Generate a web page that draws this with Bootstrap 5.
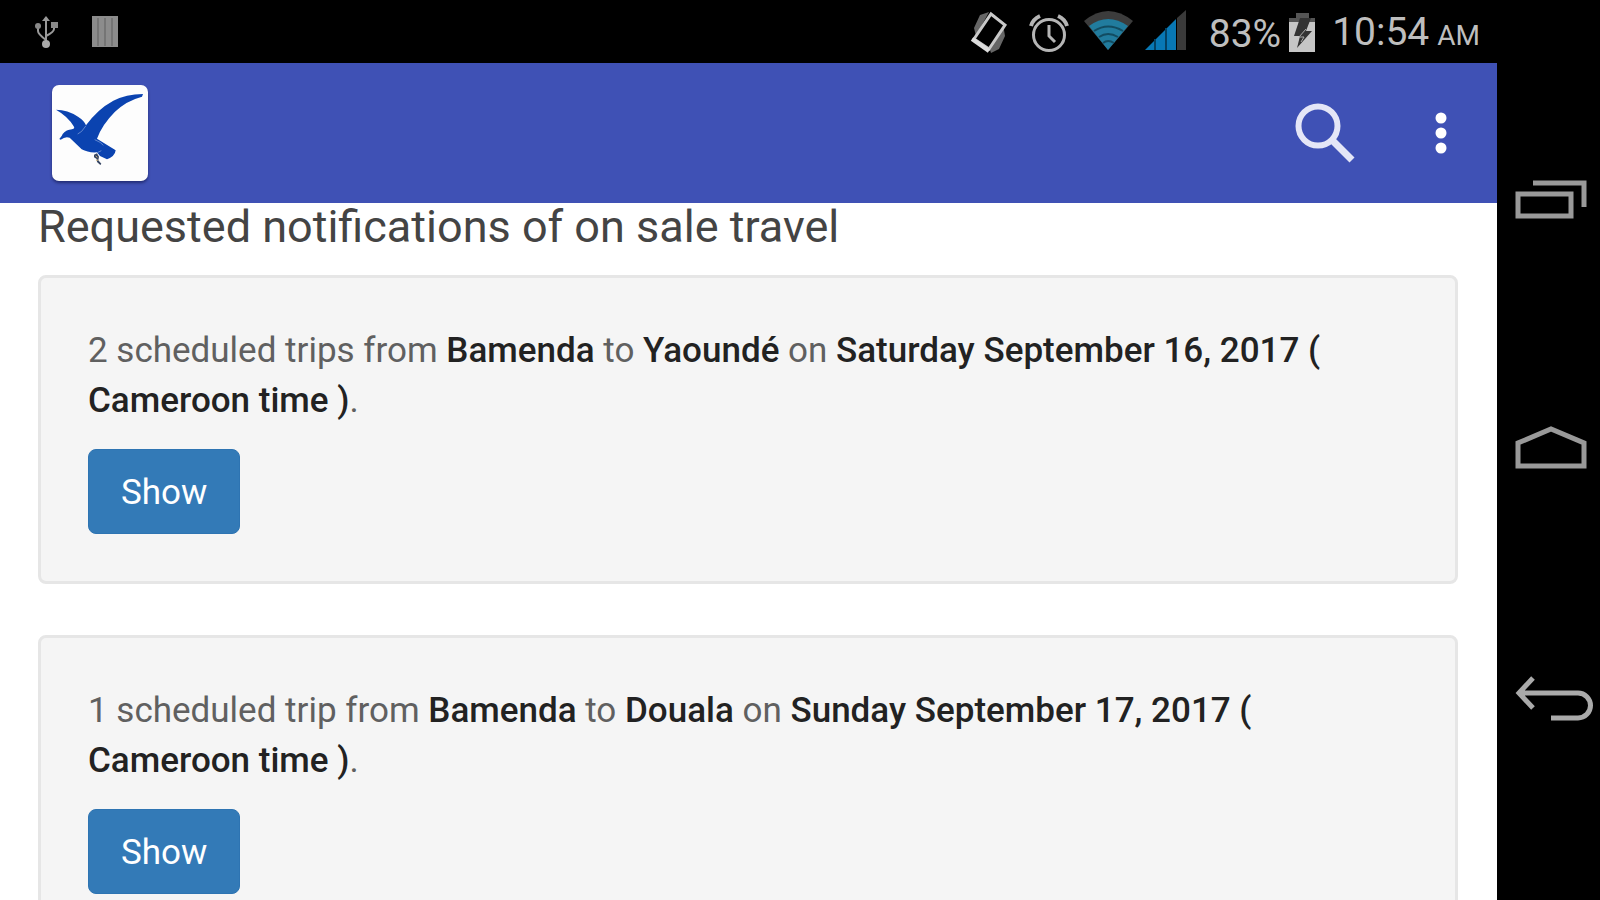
<!DOCTYPE html>
<html lang="en">
<head>
<meta charset="utf-8">
<meta name="viewport" content="width=device-width, initial-scale=1">
<title>Requested notifications</title>
<link rel="stylesheet" href="https://cdn.jsdelivr.net/npm/bootstrap@5.3.0/dist/css/bootstrap.min.css">
<style>
  body { font-family: Roboto, "Liberation Sans", sans-serif; background: #000; }
  svg { display: block; flex: none; }
  .status-bar { height: 63px; background: #000; color: #bebebe; padding: 3px 17px 0 35px; }
  .status-text { font-size: 39px; line-height: 48px; padding-top: 2px; }
  .status-text small { font-size: 28px; }
  .app-bar { height: 140px; background: #3f51b5; padding: 0 42px 0 52px; }
  .logo-tile { background: #fdfdfd; border-radius: 7px; box-shadow: 0 2px 3px rgba(0,0,40,.45); }
  .page-body { background: #fff; padding: 0 39px 0 38px; overflow-y: auto; scrollbar-width: none; }
  .page-body::-webkit-scrollbar { display: none; }
  .page-title { font-size: 45px; line-height: 48px; font-weight: 400; color: #444; margin: 0 0 24px; }
  .trip { background: #f5f5f5; border: 3px solid #e6e6e6; border-radius: 8px; padding: 48px 47px 47px; margin-bottom: 51px; font-size: 35px; line-height: 50px; }
  .trip p { font-weight: 400; color: #606060; margin-bottom: 23px; }
  .trip strong { font-weight: 500; color: #222; }
  .btn-show { --bs-btn-bg: #337ab7; --bs-btn-border-color: #2e74b2; --bs-btn-color: #fff; --bs-btn-hover-bg: #286090; --bs-btn-hover-color: #fff; --bs-btn-font-size: 35px; --bs-btn-line-height: 51px; --bs-btn-padding-x: 32px; --bs-btn-border-radius: 8px; padding-top: 17px; padding-bottom: 15px; }
  .nav-keys { width: 103px; padding: 75px 0 75px 8px; background: #000; }
  .icon-btn { background: none; border: 0; padding: 0; }
</style>
</head>
<body>
<div class="d-flex vh-100 overflow-hidden">
  <div class="d-flex flex-column flex-grow-1 overflow-hidden">
    <div class="status-bar d-flex align-items-center justify-content-between flex-shrink-0">
      <div class="d-flex align-items-center">
        <svg width="84" height="36" viewBox="35 15 84 36" fill="none" stroke="#999" stroke-width="2">
          <path d="M46 18v24M38 26v5q0 3 8 9M54 25v4q0 3-8 7"/>
          <path d="M42 21l4-5 4 5z" fill="#999" stroke="none"/>
          <circle cx="38" cy="26" r="3" fill="#888" stroke="none"/><path d="M51 22h7v6h-7z" fill="#888" stroke="none"/>
          <circle cx="46" cy="44" r="4" fill="#aaa" stroke="none"/>
          <path d="M92 16h26v31H92z" fill="#8c8c8c" stroke="none"/>
          <path d="M98 18v28M105 18v28M112 18v28" stroke="#5e5e5e" stroke-width="1"/>
        </svg>
      </div>
      <div class="d-flex align-items-center">
        <svg width="220" height="48" viewBox="968 8 220 48" fill="none">
          <path d="M973 27l6-13 9-3-13 24zM1004 35l-6 13-8 4-2-6 14-23z" fill="#666"/>
          <path d="M990 13l14 11-16 24-15-10z" stroke="#c9c9c9" stroke-width="3" fill="#000"/>
          <path d="M971 38l17 12" stroke="#ddd" stroke-width="4"/>
          <circle cx="1048" cy="34" r="15.500" stroke="#b5b5b5" stroke-width="3"/>
          <path d="M1048 24v11l6 6" stroke="#b5b5b5" stroke-width="3"/>
          <path d="M1030 25q2-7 9-10M1066 25q-2-7-9-10" stroke="#b5b5b5" stroke-width="4"/>
          <path d="M1107 49L1083 20q24-20 49 0z" fill="#3c3c3c"/>
          <path d="M1107 49L1088 25q19-14 39 0z" fill="#217c9e"/>
          <path d="M1093 30q14-9 29 0M1098 36q9-6 19 0M1102 42q5-4 11 0" stroke="#124c61" stroke-width="2"/>
          <path d="M1144 49L1175 18v31z" fill="#0878b5"/>
          <path d="M1154 38v11M1165 27v22" stroke="#044264" stroke-width="2"/>
          <path d="M1176 17l9-8v40h-9z" fill="#3a3a3a"/>
        </svg>
        <span class="status-text ms-3 ps-1">83%</span>
        <svg class="ms-2 me-3" width="27" height="42" viewBox="1290 10 27 42">
          <path d="M1297 11h13v5h6v9h-26v-9h7z" fill="#555"/><path d="M1290 20h26v30h-26z" fill="#c6c6c6"/>
          <path d="M1301 16h11l-5 13h6l-15 17 3-12h-6z" fill="#333"/><path d="M1307 27l-7 8h5l-3 5" fill="none" stroke="#aaa"/>
        </svg>
        <span class="status-text text-nowrap">10:54<small class="ms-2">AM</small></span>
      </div>
    </div>

    <header class="app-bar d-flex align-items-center justify-content-between flex-shrink-0">
      <a href="#" class="logo-tile" aria-label="Home">
        <svg width="96" height="96" viewBox="158 255 288 288">
          <path d="M170 329Q205 329 236 350Q255 362 260 376Q294 328 342 302Q380 283 431 282L428 290Q382 302 347 335Q308 374 293 416L349 451Q347 469 323 478L302 468L293 457Q267 459 247 448L211 413Q198 408 184 419L180 417Q189 406 190 402Q201 389 218 388Q228 386 223 379Q207 350 170 329Z" fill="#0b43b0"/>
          <path d="M260 377L247 394L235 402M286 419Q306 427 312 436M294 458L306 452" fill="none" stroke="#8aa6dc" stroke-width="2"/>
          <path d="M284 464l9-4 6 10-2 11 9 10-3 4-10-9-1-9-8-5z" fill="#344462"/><path d="M289 468l5 4M297 480l-7 1" stroke="#d7b980" stroke-width="3"/>
        </svg>
      </a>
      <div class="d-flex align-items-center">
        <button type="button" class="icon-btn me-5" aria-label="Search">
          <svg width="60" height="62" viewBox="1294 101 60 62" fill="none" stroke="#e4e6f7">
            <circle cx="1317" cy="125" r="19.500" stroke-width="6"/><path d="M1331 139l20 20" stroke-width="7"/>
          </svg>
        </button>
        <button type="button" class="icon-btn ms-3" aria-label="More options">
          <svg width="36" height="46" viewBox="1418 110 36 46" fill="#fff">
            <circle cx="1440" cy="118" r="5.500"/><circle cx="1440" cy="133" r="5.500"/><circle cx="1440" cy="148" r="5.500"/>
          </svg>
        </button>
      </div>
    </header>

    <main class="page-body flex-grow-1">
      <h1 class="page-title">Requested notifications of on sale travel</h1>
      <section class="trip">
        <p>2 scheduled trips from <strong>Bamenda</strong> to <strong>Yaoundé</strong> on <strong>Saturday September 16, 2017 ( Cameroon time )</strong>.</p>
        <button type="button" class="btn btn-show d-block">Show</button>
      </section>
      <section class="trip">
        <p>1 scheduled trip from <strong>Bamenda</strong> to <strong>Douala</strong> on <strong>Sunday September 17, 2017 ( Cameroon time )</strong>.</p>
        <button type="button" class="btn btn-show d-block">Show</button>
      </section>
    </main>
  </div>

  <nav class="nav-keys d-flex flex-column flex-shrink-0" aria-label="System keys">
    <button type="button" class="icon-btn flex-fill d-flex align-items-center justify-content-center" aria-label="Recent apps">
      <svg width="80" height="44" viewBox="1513 177 80 44" fill="none" stroke="#999" stroke-width="5">
        <path d="M1518 194h53v22h-53zM1533 183h51v24"/>
      </svg>
    </button>
    <button type="button" class="icon-btn flex-fill d-flex align-items-center justify-content-center" aria-label="Home screen">
      <svg width="80" height="46" viewBox="1513 425 80 46" fill="none" stroke="#999" stroke-width="5">
        <path d="M1518 466v-23l33-14 33 14v23z"/>
      </svg>
    </button>
    <button type="button" class="icon-btn flex-fill d-flex align-items-center justify-content-center" aria-label="Back">
      <svg width="80" height="48" viewBox="1513 675 80 48" fill="none" stroke="#aaa" stroke-width="5">
        <path d="M1533 678l-14 15 14 15M1519 693h59a12.500 12.500 0 0 1 0 25h-27"/>
      </svg>
    </button>
  </nav>
</div>
<script src="https://cdn.jsdelivr.net/npm/bootstrap@5.3.0/dist/js/bootstrap.bundle.min.js"></script>
</body>
</html>
